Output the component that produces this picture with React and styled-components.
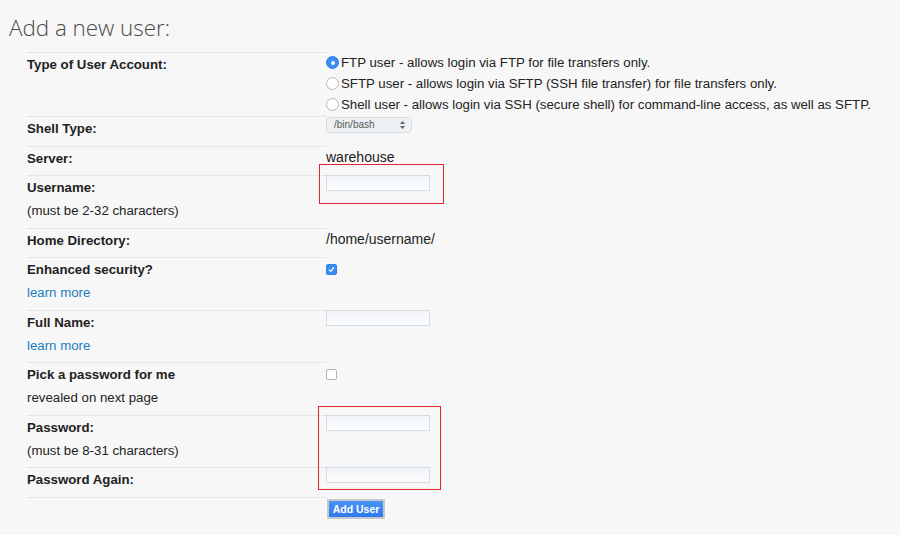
import React from "react";
import styled, { createGlobalStyle } from "styled-components";

const GlobalStyle = createGlobalStyle`
  html, body {
    margin: 0;
    padding: 0;
    background: #f7f7f7;
  }
  body {
    font-family: "Liberation Sans", Arial, sans-serif;
    color: #222;
  }
`;

const Page = styled.div`
  position: relative;
  width: 900px;
  height: 535px;
  background: #f7f7f7;
  overflow: hidden;
`;

const Title = styled.h1`
  margin: 0;
  padding: 15px 0 0 9px;
  height: 38px;
  box-sizing: border-box;
  font-family: "Open Sans", sans-serif;
  font-weight: 300;
  font-size: 22.4px;
  line-height: 26px;
  color: #4a4a4a;
`;

const Form = styled.div`
  display: grid;
  grid-template-columns: 299px 1fr;
  margin: 14px 0 0 27px;
  font-size: 13.25px;
`;

const LabelCell = styled.div`
  border-top: 1px dotted #d3d6d9;
  padding: 0 0 5.5px;
  line-height: 23px;
`;

const ValueCell = styled.div`
  line-height: 23px;
`;

const PlainValue = styled(ValueCell)`
  font-size: 14px;
  line-height: 22px;
`;

const Label = styled.div`
  font-weight: bold;
`;

const Note = styled.div`
  color: #222;
`;

const Link = styled.a`
  display: block;
  color: #1b7cbf;
  text-decoration: none;
`;

const RadioList = styled.div`
  display: flex;
  flex-direction: column;
  padding-bottom: 1px;
`;

const RadioRow = styled.label`
  display: flex;
  align-items: center;
  gap: 2px;
  height: 21px;
`;

const Radio = styled.span`
  width: 13px;
  height: 13px;
  border-radius: 50%;
  box-sizing: border-box;
  flex: none;
  display: flex;
  align-items: center;
  justify-content: center;
  border: 1px solid ${(p) => (p.$on ? "#2f7fe6" : "#b8b8b8")};
  background: ${(p) => (p.$on ? "#3a8ef3" : "#fff")};
  &::after {
    content: "";
    display: ${(p) => (p.$on ? "block" : "none")};
    width: 4px;
    height: 4px;
    border-radius: 50%;
    background: #fff;
  }
`;

const Select = styled.div`
  width: 86px;
  height: 16px;
  box-sizing: border-box;
  border: 1px solid #d6dde4;
  border-radius: 4px;
  background: #eef1f4;
  display: flex;
  align-items: center;
  justify-content: space-between;
  padding: 0 6px 0 7px;
  font-size: 10px;
  line-height: 14px;
  color: #555;
  margin-top: 1px;
`;

const Arrows = styled.svg`
  width: 5px;
  height: 8px;
`;

const TextInput = styled.div`
  width: 104px;
  height: 16px;
  box-sizing: border-box;
  border: 1px solid #d3dce4;
  background: linear-gradient(#f2f5f8, #fbfcfd);
`;

const CheckBox = styled.span`
  display: block;
  width: 11px;
  height: 11px;
  box-sizing: border-box;
  margin-top: 7px;
  border-radius: 2px;
  border: 1px solid ${(p) => (p.$on ? "#2f7fe6" : "#b4b4b4")};
  background: ${(p) => (p.$on ? "#3a8ef3" : "#fff")};
  position: relative;
  svg {
    position: absolute;
    left: 1px;
    top: 1px;
  }
`;

const Button = styled.button`
  margin: 2px 0 0 1px;
  width: 58px;
  height: 20px;
  box-sizing: border-box;
  border: 2px solid #c6c9cc;
  background: linear-gradient(#4a94f6, #2f78ec);
  color: #fff;
  font-family: "Liberation Sans", Arial, sans-serif;
  font-weight: bold;
  font-size: 10.5px;
  padding: 0;
  cursor: pointer;
`;

const Mark = styled.div`
  position: absolute;
  border: 1px solid #e3242b;
  left: ${(p) => p.$x}px;
  top: ${(p) => p.$y}px;
  width: ${(p) => p.$w}px;
  height: ${(p) => p.$h}px;
  box-sizing: border-box;
`;

function Check() {
  return (
    <svg width="7" height="7" viewBox="0 0 7 7">
      <path d="M1 3.6 L2.8 5.4 L6 1.4" fill="none" stroke="#fff" strokeWidth="1.3" />
    </svg>
  );
}

export default function App() {
  return (
    <Page>
      <GlobalStyle />
      <Title>Add a new user:</Title>
      <Form>
        <LabelCell>
          <Label>Type of User Account:</Label>
        </LabelCell>
        <ValueCell>
          <RadioList>
            <RadioRow>
              <Radio $on />
              FTP user - allows login via FTP for file transfers only.
            </RadioRow>
            <RadioRow>
              <Radio />
              SFTP user - allows login via SFTP (SSH file transfer) for file transfers only.
            </RadioRow>
            <RadioRow>
              <Radio />
              Shell user - allows login via SSH (secure shell) for command-line access, as well as SFTP.
            </RadioRow>
          </RadioList>
        </ValueCell>

        <LabelCell>
          <Label>Shell Type:</Label>
        </LabelCell>
        <ValueCell>
          <Select>
            /bin/bash
            <Arrows viewBox="0 0 5 8">
              <path d="M2.5 0 L5 3 H0 Z M2.5 8 L5 5 H0 Z" fill="#666" />
            </Arrows>
          </Select>
        </ValueCell>

        <LabelCell>
          <Label>Server:</Label>
        </LabelCell>
        <PlainValue>warehouse</PlainValue>

        <LabelCell>
          <Label>Username:</Label>
          <Note>(must be 2-32 characters)</Note>
        </LabelCell>
        <ValueCell>
          <TextInput />
        </ValueCell>

        <LabelCell>
          <Label>Home Directory:</Label>
        </LabelCell>
        <PlainValue>/home/username/</PlainValue>

        <LabelCell>
          <Label>Enhanced security?</Label>
          <Link href="#">learn more</Link>
        </LabelCell>
        <ValueCell>
          <CheckBox $on>
            <Check />
          </CheckBox>
        </ValueCell>

        <LabelCell>
          <Label>Full Name:</Label>
          <Link href="#">learn more</Link>
        </LabelCell>
        <ValueCell>
          <TextInput />
        </ValueCell>

        <LabelCell>
          <Label>Pick a password for me</Label>
          <Note>revealed on next page</Note>
        </LabelCell>
        <ValueCell>
          <CheckBox />
        </ValueCell>

        <LabelCell>
          <Label>Password:</Label>
          <Note>(must be 8-31 characters)</Note>
        </LabelCell>
        <ValueCell>
          <TextInput />
        </ValueCell>

        <LabelCell>
          <Label>Password Again:</Label>
        </LabelCell>
        <ValueCell>
          <TextInput />
        </ValueCell>

        <LabelCell />
        <ValueCell>
          <Button>Add User</Button>
        </ValueCell>
      </Form>
      <Mark $x={319} $y={164} $w={125} $h={40} />
      <Mark $x={318} $y={406} $w={123} $h={84} />
    </Page>
  );
}
